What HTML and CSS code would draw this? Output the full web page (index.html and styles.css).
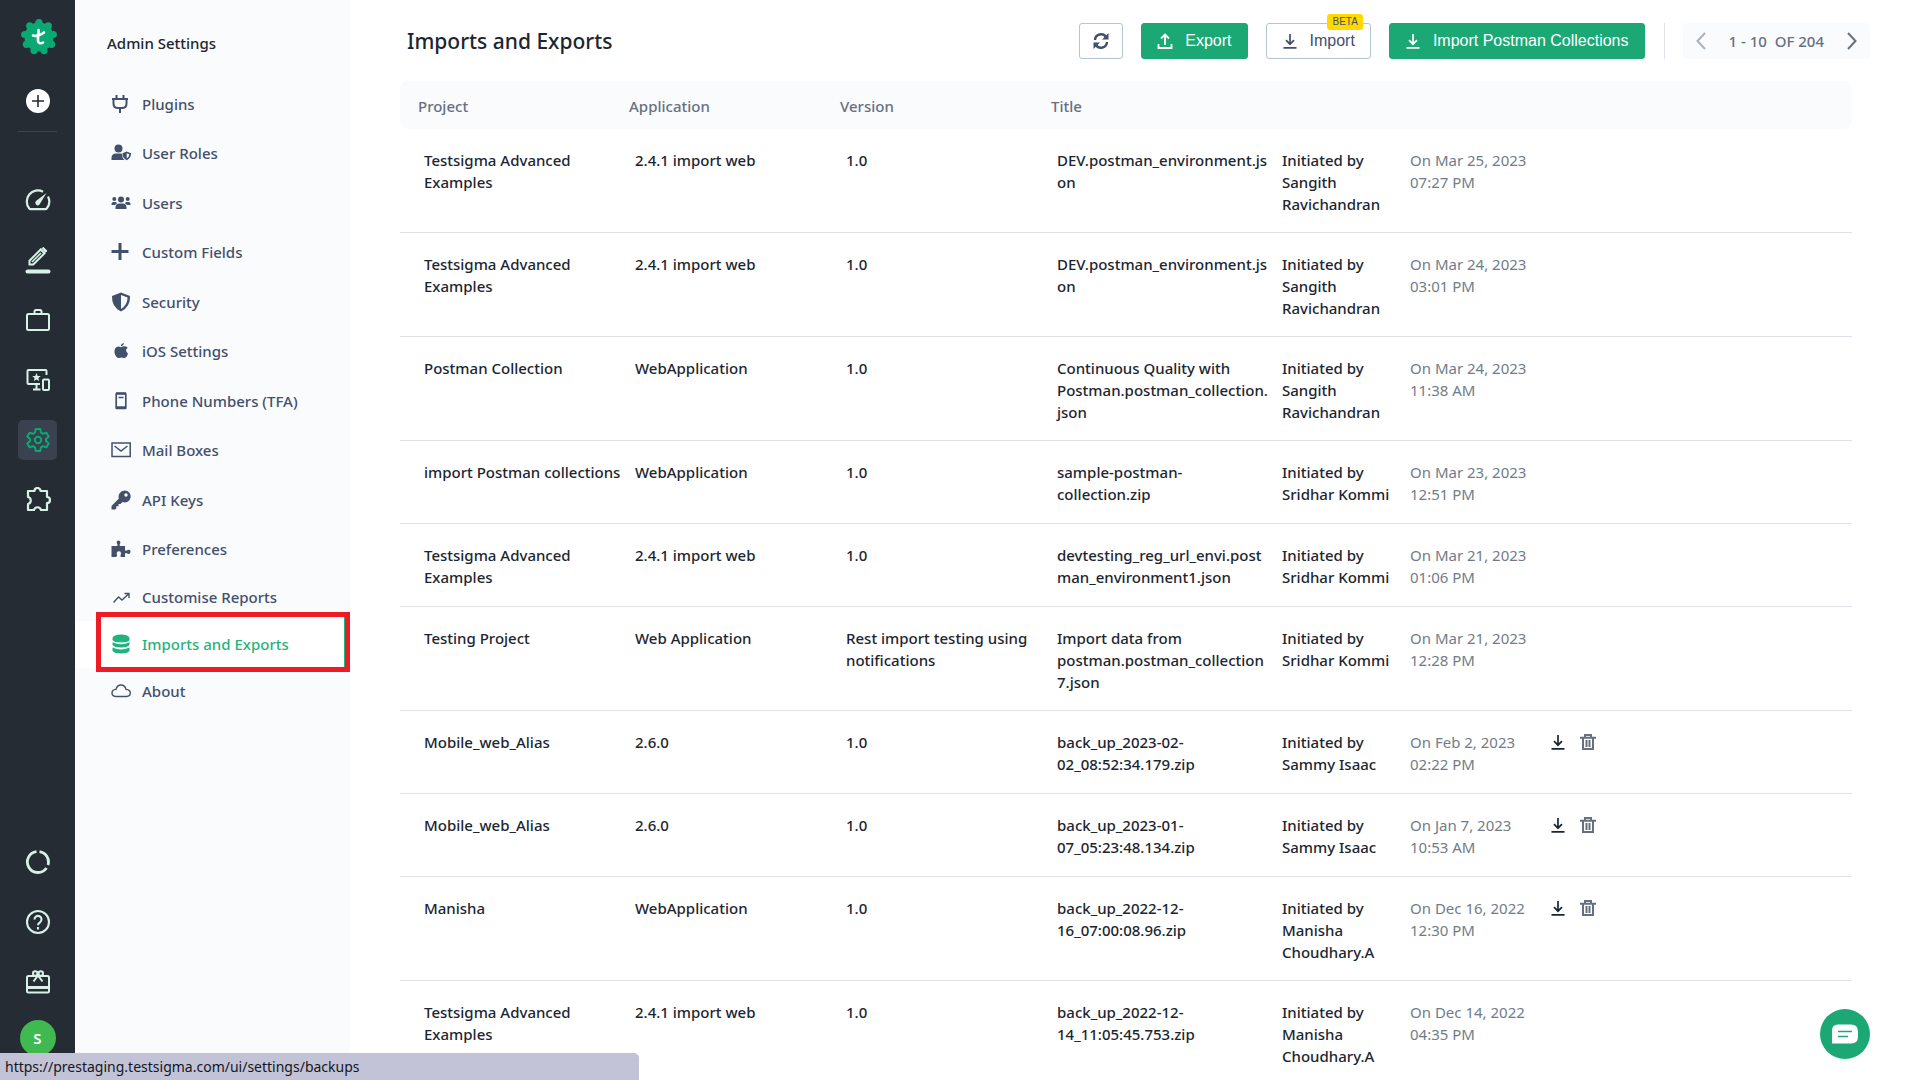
FILE: index.html
```html
<!DOCTYPE html>
<html lang="en">
<head>
<meta charset="utf-8">
<title>Imports and Exports</title>
<meta name="viewport" content="width=device-width, initial-scale=1">
<link rel="stylesheet" href="styles.css">
</head>
<body>
<svg class="sprite" aria-hidden="true">
  <symbol id="download" viewBox="0 0 16 16"><path d="M8 1v10M4 7.200l4 4 4-4M1.500 14.800h13" fill="none" stroke="currentColor" stroke-width="1.700"/></symbol>
  <symbol id="trash" viewBox="0 0 16 16"><path d="M5 3V1h6v2M0 3.700h16M3 4v11h10V4M6.500 6v7M9.500 6v7" fill="none" stroke="currentColor" stroke-width="2"/></symbol>
</svg>
<div class="app">
  <nav class="rail" aria-label="Main">
    <a class="logo" href="#" aria-label="Testsigma home">
      <svg width="38" height="38" viewBox="0 0 38 38"><g fill="#0aa873"><circle cx="19" cy="19" r="14.500"/><g><circle cx="19" cy="4.500" r="3.600"/><circle cx="28.300" cy="7.900" r="3.600"/><circle cx="33.300" cy="16.500" r="3.600"/><circle cx="31.600" cy="26.300" r="3.600"/><circle cx="24" cy="32.600" r="3.600"/><circle cx="14" cy="32.600" r="3.600"/><circle cx="6.400" cy="26.300" r="3.600"/><circle cx="4.700" cy="16.500" r="3.600"/><circle cx="9.700" cy="7.900" r="3.600"/></g></g><path d="M18.500 12c.5 4-1 8-.5 11 .3 2.500 3 2.800 5 1.500M13 17.500c3 1 8-.5 11-3" fill="none" stroke="#fff" stroke-width="2.600" stroke-linecap="round"/></svg>
    </a>
    <button class="add" type="button" aria-label="Create"><svg width="14" height="14" viewBox="0 0 14 14"><path d="M7 1v12M1 7h12" stroke="#262c34" stroke-width="1.600"/></svg></button>
    <hr class="rule">
    <div class="rail-group">
      <a href="#" class="rail-link" aria-label="Dashboard"><span><svg width="26" height="26" viewBox="0 0 26 26" fill="none" stroke="currentColor" stroke-width="2.200"><path d="M18 4.800A11 11 0 0 0 4.300 21.500q.4.700 1.200.7h15q.8 0 1.200-.7A11 11 0 0 0 23 9.500"/><path d="M21.500 6 11 14a2.400 2.400 0 0 0 3.500 3.500z" fill="currentColor" stroke="none"/></svg></span></a>
      <a href="#" class="rail-link" aria-label="Create tests"><span><svg width="26" height="28" viewBox="0 0 26 28" fill="none" stroke="currentColor"><path d="M4.500 18.500v-3.800L15.700 3.500l3.800 3.800L8.300 18.500z" stroke-width="2"/><path d="m7 16 9-9" stroke-width="1.500"/><path d="m17 2.500 1.300-1.300 3.700 3.700-1.500 1.400z" fill="currentColor"/><path d="M2.500 25.500h21" stroke-width="4" stroke-linecap="round"/></svg></span></a>
      <a href="#" class="rail-link" aria-label="Test plans"><span><svg width="26" height="26" viewBox="0 0 26 26" fill="none" stroke="currentColor" stroke-width="2"><rect x="2" y="7" width="22" height="16" rx="1.500"/><path d="M9.500 7V4.500Q9.500 3 11 3h4q1.500 0 1.500 1.500V7"/></svg></span></a>
      <a href="#" class="rail-link" aria-label="Test devices"><span><svg width="26" height="26" viewBox="0 0 26 26" fill="none" stroke="currentColor" stroke-width="2"><path d="M21.500 8V4q0-1-1-1h-17q-1 0-1 1v12q0 1 1 1H15M11.500 17v5M8 22.500h7.500"/><rect x="18" y="12.500" width="6" height="10.500" rx="1"/><path d="m11.500 6 1.200 2.900 3.100.2-2.400 2 .8 3-2.700-1.700-2.700 1.700.8-3-2.400-2 3.100-.2z" fill="currentColor" stroke="none"/></svg></span></a>
      <a href="#" class="rail-link active" aria-label="Settings" aria-current="page"><span><svg width="26" height="26" viewBox="0 0 26 26" fill="none" stroke="currentColor" stroke-width="2" stroke-linejoin="round"><path d="M10.800 2h4.400l.8 3.600 2 1.200 3.500-1.100 2.200 3.800-2.700 2.400v2.200l2.700 2.400-2.200 3.800-3.500-1.100-2 1.200-.8 3.600h-4.400l-.8-3.600-2-1.200-3.500 1.100-2.200-3.800L5 14.100v-2.200L2.300 9.500l2.200-3.800L8 6.800l2-1.200z"/><circle cx="13" cy="13" r="3.200"/></svg></span></a>
      <a href="#" class="rail-link" aria-label="Add-ons"><span><svg width="26" height="26" viewBox="0 0 26 26" fill="none" stroke="currentColor" stroke-width="2.200" stroke-linejoin="round"><path d="M3 4h6.500a3 3 0 0 1 6 0H22v6a3 3 0 0 1 0 6v7h-6a3.600 3.600 0 0 0-7 0H3v-6a3.600 3.600 0 0 0 0-7z"/></svg></span></a>
    </div>
    <div class="rail-group rail-bottom">
      <a href="#" class="rail-link" aria-label="Usage"><span><svg width="26" height="26" viewBox="0 0 26 26" fill="none" stroke="currentColor" stroke-width="2.800"><path d="M14.500 2.600A10.500 10.500 0 0 1 23 16M21.500 19A10.500 10.500 0 1 1 11.500 2.600"/></svg></span></a>
      <a href="#" class="rail-link" aria-label="Help"><span><svg width="26" height="26" viewBox="0 0 26 26" fill="none" stroke="currentColor" stroke-width="2.100"><circle cx="13" cy="13" r="11"/><path d="M9.500 10.500a3.500 3.500 0 1 1 5.500 2.800q-2 1.400-2 3M13 18v2.400"/></svg></span></a>
      <a href="#" class="rail-link" aria-label="What's new"><span><svg width="26" height="26" viewBox="0 0 26 26" fill="none" stroke="currentColor" stroke-width="2"><rect x="2" y="7" width="22" height="16.500" rx="1.500"/><path d="M2 18.500h22" stroke-width="3"/><path d="m8.500 12.500 4.500-6 4.500 6"/><circle cx="10.200" cy="4.500" r="2.200"/><circle cx="15.800" cy="4.500" r="2.200"/></svg></span></a>
    </div>
    <button class="avatar" type="button" aria-label="Account">S</button>
  </nav>

  <aside class="side">
    <h2>Admin Settings</h2>
    <ul class="menu">
      <li><a href="#"><svg viewBox="0 0 20 20" fill="none" stroke="currentColor" stroke-width="2"><path d="M5.500 1v3M12.500 1v3M1 5h16M2.500 5v4.500q0 4.500 4.500 4.500h4q4.500 0 4.500-4.500V5M9 14v5"/></svg>Plugins</a></li>
      <li><a href="#"><svg viewBox="0 0 20 20" fill="currentColor"><circle cx="7.500" cy="5.500" r="4"/><path d="M.5 17v-2q0-4.500 4.500-4.500h4.500q1 0 1.500.5 0 4 2.500 6z"/><path d="m15.700 8.500 4.300 1.700q0 5-4.300 7-4.200-2-4.200-7zm0 1.800v5q2.500-1.500 2.700-4z" fill-rule="evenodd"/></svg>User Roles</a></li>
      <li><a href="#"><svg viewBox="0 0 20 20" fill="currentColor"><circle cx="10" cy="6.500" r="3"/><circle cx="3.300" cy="6" r="2"/><circle cx="16.700" cy="6" r="2"/><path d="M4.500 16v-1.500q0-4 4-4h3q4 0 4 4V16zM.5 12v-1q0-2 2-2h2.500l1 1.300L4 12zM19.500 12v-1q0-2-2-2H15l-1 1.300 2 1.700z"/></svg>Users</a></li>
      <li><a href="#"><svg viewBox="0 0 20 20" stroke="currentColor" stroke-width="3"><path d="M9 1v17M.5 9.500h17"/></svg>Custom Fields</a></li>
      <li><a href="#"><svg viewBox="0 0 20 20" fill="currentColor"><path d="m10 .5 9 3.500q.5 11-9 15.500Q.5 15 1 4zm0 2.400v14q6.500-4 6.600-11.400z" fill-rule="evenodd"/></svg>Security</a></li>
      <li><a href="#"><svg viewBox="0 0 20 20" fill="currentColor"><path d="M13 2q-.5 3-3.200 3.200Q10 2.500 13 2zM10 6.200q2.500-1.500 5-.7 1 .4 1.700 1.300-3.400 2.600.3 5.600Q15.600 17 13 17q-2.500-1-5 0Q5 17.200 3.500 12 3 6.200 7 5.500q1.500 0 3 .7z"/></svg>iOS Settings</a></li>
      <li><a href="#"><svg viewBox="0 0 20 20" fill="none" stroke="currentColor"><rect x="5.200" y="2.500" width="9.600" height="15" rx=".5" stroke-width="1.700"/><path d="M5 2.500h10M5 16.500h10" stroke-width="2.500"/><path d="M7.500 6.500h5" stroke-width="1.500"/></svg>Phone Numbers (TFA)</a></li>
      <li><a href="#"><svg viewBox="0 0 20 20" fill="none" stroke="currentColor" stroke-width="1.500"><rect x="1" y="3" width="18.200" height="13.500"/><path d="m3.500 6 6.500 5 6.500-5"/></svg>Mail Boxes</a></li>
      <li><a href="#"><svg viewBox="0 0 20 20" fill="currentColor"><path d="M13.500.5a6 6 0 1 1-2 11.600L9.500 14H7.500v2.200H5.300v2.300L4 19.500H.5V16l7.400-7.400A6.100 6.100 0 0 1 13.500.5zM15 3.300a1.700 1.700 0 1 0 0 3.400 1.700 1.700 0 0 0 0-3.400z" fill-rule="evenodd"/></svg>API Keys</a></li>
      <li><a href="#"><svg viewBox="0 0 20 20" fill="currentColor"><path d="M.5 7h4.800Q7 7 6.500 5.500 5 3.500 6 2.300q1.500-1.500 3 0 1 1.200-.3 3.200Q8 7 10 7h4v3.500q0 2 1.600 1 3.900-2 3.900 1.300t-3.900 1.500q-1.600-1-1.600 1V18h-3.500q-1.500 0-1-1.500 1.500-4-1.500-4.200-3 0-2 4Q6.500 18 4.500 18h-4z"/></svg>Preferences</a></li>
    </ul>
    <ul class="menu compact">
      <li><a href="#"><svg viewBox="0 0 20 20" fill="none" stroke="currentColor" stroke-width="1.400"><path d="m2.500 15.500 5-5.500 3.500 3 6.500-6M13.500 6.500H18v4.500"/></svg>Customise Reports</a></li>
      <li class="current"><a href="#" aria-current="page"><svg viewBox="0 0 20 20" fill="currentColor"><ellipse cx="10" cy="4" rx="8.500" ry="3.500"/><path d="M1.500 4.500q8.500 5.500 17 0V6q-1 2.500-8.500 2.500T1.500 6zM1.500 8.200q8.500 4 17 0V11q-2 2.500-8.500 2.500T1.500 11zM1.500 13.500q8.500 4 17 0V17q-2 2.500-8.500 2.500T1.500 17z"/></svg>Imports and Exports</a></li>
      <li><a href="#"><svg viewBox="0 0 20 20" fill="none" stroke="currentColor" stroke-width="1.400"><path d="M4.800 15.500Q1 15.300 1 12t4-3.600Q6 4 10 4t5 4.400q4.300.4 4.300 3.600t-3.800 3.500z"/></svg>About</a></li>
    </ul>
  </aside>

  <main class="main">
    <header class="top">
      <h1>Imports and Exports</h1>
      <div class="actions">
        <button class="btn icon-only" type="button" aria-label="Refresh"><svg width="16" height="16" viewBox="0 0 16 16" fill="none" stroke="currentColor" stroke-width="2.400"><path d="M2 7a6 6 0 0 1 11-3M14 9a6 6 0 0 1-11 3"/><path d="M15.500 0v6.500H9zM.5 16V9.500H7z" fill="currentColor" stroke="none"/></svg></button>
        <button class="btn green" type="button"><svg width="16" height="16" viewBox="0 0 16 16" fill="none" stroke="currentColor" stroke-width="1.800"><path d="M8 12V2M4 5.500l4-4 4 4M1.500 11v4h13v-4"/></svg>Export</button>
        <button class="btn import" type="button"><svg width="16" height="16"><use href="#download"/></svg>Import<span class="beta">BETA</span></button>
        <button class="btn green" type="button"><svg width="16" height="16"><use href="#download"/></svg>Import Postman Collections</button>
      </div>
      <div class="pager">
        <button type="button" disabled aria-label="Previous page"><svg width="10" height="18" viewBox="0 0 10 18" fill="none" stroke="currentColor" stroke-width="2"><path d="M9 1 1.500 9 9 17"/></svg></button>
        <span>1 - 10 &nbsp;OF 204</span>
        <button type="button" aria-label="Next page"><svg width="10" height="18" viewBox="0 0 10 18" fill="none" stroke="currentColor" stroke-width="2"><path d="m1 1 7.500 8L1 17"/></svg></button>
      </div>
    </header>

    <table class="list">
      <colgroup><col class="c-project"><col class="c-mid"><col class="c-mid"><col class="c-title"><col class="c-by"><col class="c-date"><col></colgroup>
      <thead>
        <tr><th scope="col">Project</th><th scope="col">Application</th><th scope="col">Version</th><th scope="col">Title</th><th></th><th></th><th></th></tr>
      </thead>
      <tbody>
        <tr><td>Testsigma Advanced<br>Examples</td><td>2.4.1 import web</td><td>1.0</td><td>DEV.postman_environment.js<br>on</td><td>Initiated by<br>Sangith<br>Ravichandran</td><td class="date">On Mar 25, 2023<br>07:27 PM</td><td></td></tr>
        <tr><td>Testsigma Advanced<br>Examples</td><td>2.4.1 import web</td><td>1.0</td><td>DEV.postman_environment.js<br>on</td><td>Initiated by<br>Sangith<br>Ravichandran</td><td class="date">On Mar 24, 2023<br>03:01 PM</td><td></td></tr>
        <tr><td>Postman Collection</td><td>WebApplication</td><td>1.0</td><td>Continuous Quality with<br>Postman.postman_collection.<br>json</td><td>Initiated by<br>Sangith<br>Ravichandran</td><td class="date">On Mar 24, 2023<br>11:38 AM</td><td></td></tr>
        <tr><td>import Postman collections</td><td>WebApplication</td><td>1.0</td><td>sample-postman-<br>collection.zip</td><td>Initiated by<br>Sridhar Kommi</td><td class="date">On Mar 23, 2023<br>12:51 PM</td><td></td></tr>
        <tr><td>Testsigma Advanced<br>Examples</td><td>2.4.1 import web</td><td>1.0</td><td>devtesting_reg_url_envi.post<br>man_environment1.json</td><td>Initiated by<br>Sridhar Kommi</td><td class="date">On Mar 21, 2023<br>01:06 PM</td><td></td></tr>
        <tr><td>Testing Project</td><td>Web Application</td><td>Rest import testing using<br>notifications</td><td>Import data from<br>postman.postman_collection<br>7.json</td><td>Initiated by<br>Sridhar Kommi</td><td class="date">On Mar 21, 2023<br>12:28 PM</td><td></td></tr>
        <tr><td>Mobile_web_Alias</td><td>2.6.0</td><td>1.0</td><td>back_up_2023-02-<br>02_08:52:34.179.zip</td><td>Initiated by<br>Sammy Isaac</td><td class="date">On Feb 2, 2023<br>02:22 PM</td><td><div class="tools"><button type="button" aria-label="Download"><svg width="16" height="16"><use href="#download"/></svg></button><button class="del" type="button" aria-label="Delete"><svg width="16" height="16"><use href="#trash"/></svg></button></div></td></tr>
        <tr><td>Mobile_web_Alias</td><td>2.6.0</td><td>1.0</td><td>back_up_2023-01-<br>07_05:23:48.134.zip</td><td>Initiated by<br>Sammy Isaac</td><td class="date">On Jan 7, 2023<br>10:53 AM</td><td><div class="tools"><button type="button" aria-label="Download"><svg width="16" height="16"><use href="#download"/></svg></button><button class="del" type="button" aria-label="Delete"><svg width="16" height="16"><use href="#trash"/></svg></button></div></td></tr>
        <tr><td>Manisha</td><td>WebApplication</td><td>1.0</td><td>back_up_2022-12-<br>16_07:00:08.96.zip</td><td>Initiated by<br>Manisha<br>Choudhary.A</td><td class="date">On Dec 16, 2022<br>12:30 PM</td><td><div class="tools"><button type="button" aria-label="Download"><svg width="16" height="16"><use href="#download"/></svg></button><button class="del" type="button" aria-label="Delete"><svg width="16" height="16"><use href="#trash"/></svg></button></div></td></tr>
        <tr><td>Testsigma Advanced<br>Examples</td><td>2.4.1 import web</td><td>1.0</td><td>back_up_2022-12-<br>14_11:05:45.753.zip</td><td>Initiated by<br>Manisha<br>Choudhary.A</td><td class="date">On Dec 14, 2022<br>04:35 PM</td><td></td></tr>
      </tbody>
    </table>
  </main>
</div>
<button class="chat" type="button" aria-label="Open chat"><svg width="28" height="20" viewBox="0 0 28 20"><path d="M7 .5h13q7 0 7 7v5q0 7-7 7H1v-13q0-6 6-6z" fill="#fff"/><path d="M7 7.500h14M7 12.500h10" stroke="#1ba875" stroke-width="1.600"/></svg></button>
<div class="status">https://prestaging.testsigma.com/ui/settings/backups</div>
</body>
</html>
```
FILE: styles.css
```css
* { box-sizing: border-box; }
body {
  margin: 0;
  background: #fff;
  color: #1c2630;
  font: 500 15px/22px "Noto Sans", "Open Sans", sans-serif;
}
button {
  font: inherit;
  color: inherit;
  border: 0;
  padding: 0;
  background: none;
  cursor: pointer;
}
a { color: inherit; text-decoration: none; }
svg { display: block; flex: none; }
.sprite { display: none; }
.app { display: grid; grid-template-columns: 75px 275px 1fr; height: 100vh; overflow: hidden; }

/* icon rail */
.rail {
  display: flex;
  flex-direction: column;
  align-items: center;
  padding: 18px 0 29px;
  background: #262c34;
  color: #d8f1e6;
}
.logo { padding-left: 3px; }
.add {
  display: grid;
  place-items: center;
  width: 24px;
  height: 24px;
  margin-top: 33px;
  border-radius: 50%;
  background: #fff;
}
.rule { width: 39px; height: 1px; margin: 18px 0 38px; border: 0; background: #0b5c48; }
.rail-link { display: grid; place-items: center; height: 60px; }
.rail-link span { display: grid; place-items: center; width: 39px; height: 40px; border-radius: 5px; }
.rail-link.active span { background: #3a414f; color: #0aa873; }
.rail-bottom { margin-top: auto; }
.avatar {
  width: 36px;
  height: 36px;
  margin-top: 8px;
  border-radius: 50%;
  background: #3fb950;
  color: #fff;
  font-weight: 600;
}

/* settings menu */
.side { padding-top: 32px; background: #fafbfd; color: #43506c; }
.side h2 { margin: 0 0 25px; padding-left: 32px; font-size: 15px; font-weight: 500; color: #1c2630; }
.menu { display: flex; flex-direction: column; height: 495px; margin: 0; padding: 0; list-style: none; }
.menu li { display: flex; flex: 1; align-items: center; position: relative; padding-left: 36px; }
.menu a { display: flex; align-items: center; gap: 11px; }
.menu svg { width: 20px; height: 20px; }
.menu.compact { height: 141px; }
.menu.compact li { padding-bottom: 2px; }
.menu .current { background: #fff; color: #1fb47c; }
.menu .current::before {
  content: "";
  position: absolute;
  inset: -9px 0 -4px 21px;
  border: 5px solid #ed1c24;
  box-shadow: inset -1px 0 #1fb47c;
}

/* content */
.main { min-width: 0; padding: 23px 50px 0 50px; }
.top { display: flex; align-items: center; height: 36px; padding-left: 7px; }
.top h1 { flex: 1; margin: 0; font-size: 21px; font-weight: 500; line-height: 36px; }
.actions { display: flex; gap: 18px; font: 16px/34px "Liberation Sans", Arial, sans-serif; }
.btn {
  display: flex;
  align-items: center;
  gap: 12px;
  height: 36px;
  padding: 0 15px;
  border: 1px solid #b4c5d3;
  border-radius: 3px;
  color: #43506c;
}
.btn.icon-only { padding: 0 13px; }
.btn.green { background: #1ba875; border-color: #1ba875; color: #fff; }
.btn.import { position: relative; }
.beta {
  position: absolute;
  top: -10px;
  right: 7px;
  padding: 0 5px;
  border-radius: 3px;
  background: #ffd900;
  font-size: 10px;
  line-height: 16px;
}
.pager {
  display: flex;
  align-items: center;
  gap: 23px;
  height: 36px;
  margin-left: 38px;
  padding: 0 13px;
  position: relative;
  border-radius: 3px;
  background: #fafbfd;
  color: #667080;
}
.pager::before { content: ""; position: absolute; left: -19px; top: 0; bottom: 0; width: 1px; background: #dfe2e6; }
.pager span { white-space: nowrap; }
.pager button:disabled { color: #a9b1bb; }

.list {
  width: calc(100% - 18px);
  margin-top: 22px;
  border-collapse: separate;
  border-spacing: 0;
  table-layout: fixed;
}
.c-project { width: 223px; }
.c-mid { width: 211px; }
.c-title { width: 225px; }
.c-by { width: 128px; }
.c-date { width: 140px; }
.list th { height: 48px; padding: 2px 0 0 6px; background: #fafbfd; color: #667080; font-weight: 500; text-align: left; }
.list th:first-child { padding-left: 18px; border-radius: 8px 0 0 8px; }
.list th:last-child { border-radius: 0 8px 8px 0; }
.list td { height: 83px; padding: 20px 0 17px 12px; border-bottom: 1px solid #dfe2e6; vertical-align: top; white-space: nowrap; }
.list td:first-child { padding-left: 24px; }
.list .date { color: #727c88; font-weight: 400; }
.tools { display: flex; gap: 14px; padding-top: 3px; }
.tools .del { color: #667080; }

.chat {
  position: fixed;
  right: 50px;
  bottom: 21px;
  display: grid;
  place-items: center;
  width: 50px;
  height: 50px;
  border-radius: 50%;
  background: #1ba875;
}
.status {
  position: fixed;
  left: 0;
  bottom: 0;
  width: 639px;
  height: 27px;
  padding: 3px 5px;
  border-radius: 0 5px 0 0;
  background: #c3c3d8;
  color: #14161c;
  font-size: 14px;
  font-weight: 400;
}
```
